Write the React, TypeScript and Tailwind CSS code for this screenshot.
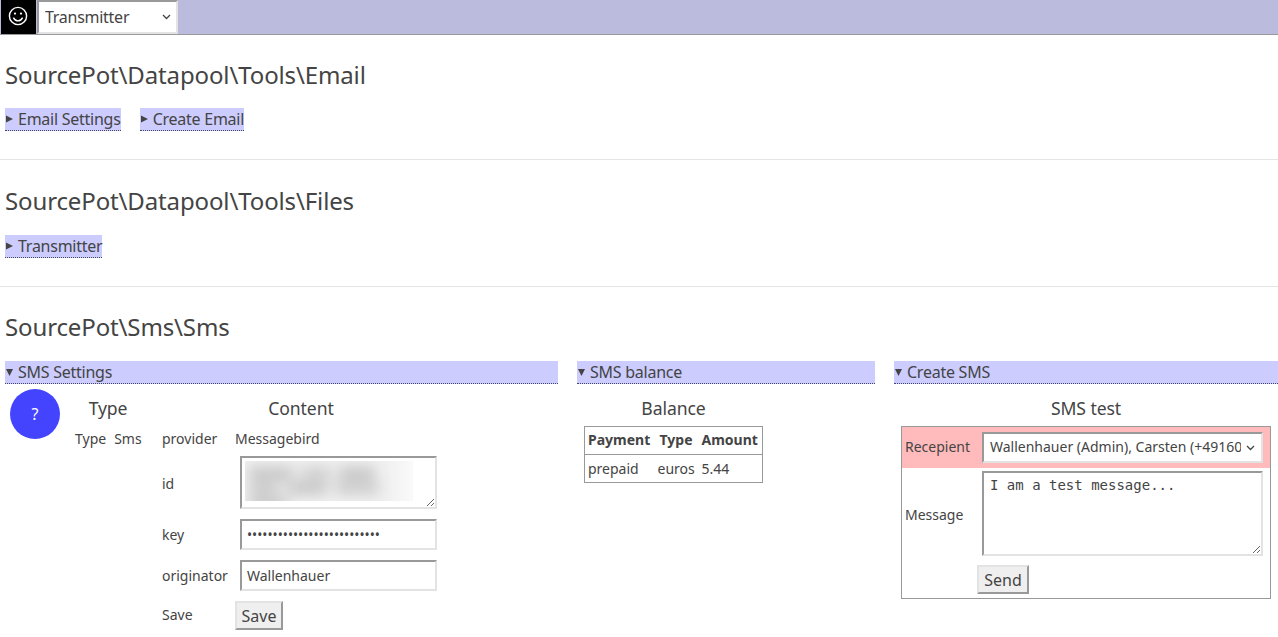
import { useState } from 'react'

const insetField = 'border-2 border-t-[#999] border-l-[#999] border-r-[#e3e3e3] border-b-[#e3e3e3] bg-white text-[#444] outline-none'
const buttonField = 'border-2 border-t-[#e3e3e3] border-l-[#e3e3e3] border-r-[#999] border-b-[#999] bg-[#efefef] text-[#444]'
const summaryClass = 'flex items-center bg-[#ccf] border-b border-dotted border-[#446] cursor-pointer whitespace-nowrap h-[23px] tracking-[-0.25px] list-none [&::-webkit-details-marker]:hidden'
const headingClass = 'text-2xl leading-8 tracking-[-0.13px]'
const captionClass = 'text-[17.6px] tracking-[-0.1px] leading-[22px] text-center h-[22px]'

function Smiley() {
  return (
    <svg className="mb-[3px] mr-[1px]" width="20" height="20" viewBox="0 0 20 20" fill="none" stroke="white" strokeWidth="1.4">
      <circle cx="10" cy="10" r="8.6" />
      <circle cx="7" cy="7.6" r="1.1" fill="white" stroke="none" />
      <circle cx="13" cy="7.6" r="1.1" fill="white" stroke="none" />
      <path d="M5.4 11.6c1 2.2 2.7 3.3 4.6 3.3s3.6-1.1 4.6-3.3" />
    </svg>
  )
}

function Chevron({ className }: { className: string }) {
  return (
    <svg className={className} width="9" height="6" viewBox="0 0 9 6" fill="none" stroke="#444" strokeWidth="1.3">
      <path d="M1 1l3.5 3.5L8 1" />
    </svg>
  )
}

function Marker({ open }: { open?: boolean }) {
  return (
    <svg className="ml-[1px] mr-[5px] shrink-0" width="7" height="8" viewBox="0 0 7 8" fill="#444">
      <path d={open ? 'M0 1h7L3.5 8z' : 'M0 0.5v7L7 4z'} />
    </svg>
  )
}

function SmsSettings() {
  return (
    <details open className="w-[553px] shrink-0">
      <summary className={summaryClass}><Marker open />SMS Settings</summary>
      <div className="flex">
        <div className="ml-[5px] mt-[5px] w-[50px] h-[50px] rounded-full bg-[#44f] text-white flex items-center justify-center text-base shrink-0">?</div>
        <div className="ml-[15px] w-[66px] text-sm">
          <div className={`${captionClass} mt-[13px] w-[66px]`}>Type</div>
          <div className="flex gap-[8px] mt-[10px]">
            <span>Type</span>
            <span>Sms</span>
          </div>
        </div>
        <div className="ml-[21px] w-[276px] text-sm">
          <div className={`${captionClass} mt-[13px] ml-[2px]`}>Content</div>
          <div className="flex mt-[10px] h-[19px]">
            <span className="w-[73px]">provider</span>
            <span>Messagebird</span>
          </div>
          <div className="flex items-center mt-[8px]">
            <span className="w-[78px] pt-[3px]">id</span>
            <div className="relative w-[197px] h-[53px]">
              <textarea readOnly defaultValue="" className={`${insetField} w-full h-full block`} />
              <div className="absolute left-[5px] top-[5px] w-[168px] h-[40px] bg-[linear-gradient(to_right,#f1f1f1_85%,#fafafa)] overflow-hidden">
                <div className="blur-[7px] w-full h-full flex flex-wrap gap-x-[8px] gap-y-[3px] px-[4px] pt-[6px]">
                  <span className="w-[44px] h-[13px] bg-[#c4c4c4]" />
                  <span className="w-[30px] h-[13px] bg-[#cdcdcd]" />
                  <span className="w-[36px] h-[13px] bg-[#c4c4c4]" />
                  <span className="w-[30px] h-[13px] bg-[#c8c8c8]" />
                  <span className="w-[40px] h-[11px] bg-[#c0c0c0]" />
                  <span className="w-[44px] h-[11px] bg-[#c8c8c8]" />
                  <span className="w-[40px] h-[11px] bg-[#c4c4c4]" />
                </div>
              </div>
            </div>
          </div>
          <div className="flex items-center mt-[10px]">
            <span className="w-[78px]">key</span>
            <input readOnly type="password" defaultValue="abcdefghijklmnopqrstuvwxyz" className={`${insetField} w-[197px] h-[31px] px-[5px] text-[13.6px]`} />
          </div>
          <div className="flex items-center mt-[10px]">
            <span className="w-[78px]">originator</span>
            <input readOnly defaultValue="Wallenhauer" className={`${insetField} w-[197px] h-[31px] px-[5px] text-sm`} />
          </div>
          <div className="flex items-center mt-[10px]">
            <span className="w-[73px] pb-[2px]">Save</span>
            <button className={`${buttonField} w-[48px] h-[29px] text-base`}>Save</button>
          </div>
        </div>
      </div>
    </details>
  )
}

function SmsBalance() {
  return (
    <details open className="w-[298px] shrink-0">
      <summary className={summaryClass}><Marker open />SMS balance</summary>
      <div className="ml-[7px] w-[179px]">
        <div className={`${captionClass} mt-[13px] mb-[7px]`}>Balance</div>
        <table className="border border-[#999] border-collapse text-sm w-[179px]">
          <thead>
            <tr className="border-b border-[#999] h-[28px]">
              <th className="text-left w-[70px] pl-[3px] pb-[2px] font-bold">Payment</th>
              <th className="text-left w-[47px] pl-[5px] pb-[2px] font-bold">Type</th>
              <th className="text-left pl-[0px] pb-[2px] font-bold">Amount</th>
            </tr>
          </thead>
          <tbody>
            <tr className="h-[28px]">
              <td className="pl-[3px]">prepaid</td>
              <td className="pl-[3px]">euros</td>
              <td className="pl-[0px]">5.44</td>
            </tr>
          </tbody>
        </table>
      </div>
    </details>
  )
}

function CreateSms() {
  const [recipient, setRecipient] = useState('carsten')
  return (
    <details open className="w-[384px] shrink-0">
      <summary className={summaryClass}><Marker open />Create SMS</summary>
      <div className="ml-[7px] w-[370px]">
        <div className={`${captionClass} mt-[13px] mb-[7px]`}>SMS test</div>
        <div className="border border-[#999] text-sm">
          <div className="flex items-center bg-[#fbb] h-[41px]">
            <span className="w-[80px] pl-[3px] pb-[1px]">Recepient</span>
            <div className="relative w-[281px] h-[31px]">
              <select
                value={recipient}
                onChange={(e) => setRecipient(e.target.value)}
                className={`${insetField} appearance-none w-full h-full pl-[6px] pr-[20px] pb-[2px] text-sm`}
              >
                <option value="carsten">Wallenhauer (Admin), Carsten (+49160 1234567)</option>
              </select>
              <Chevron className="absolute right-[8px] top-[13px] pointer-events-none" />
            </div>
          </div>
          <div className="flex items-center mt-[3px]">
            <span className="w-[80px] pl-[3px] pt-[2px]">Message</span>
            <textarea
              readOnly
              defaultValue="I am a test message..."
              className={`${insetField} w-[281px] h-[85px] px-[6px] py-[2px] text-sm font-['DejaVu_Sans_Mono',monospace]`}
            />
          </div>
          <div className="pl-[75px] mt-[9px] mb-[4px]">
            <button className={`${buttonField} w-[52px] h-[29px] text-base`}>Send</button>
          </div>
        </div>
      </div>
    </details>
  )
}

export default function App() {
  return (
    <div className="h-[637px] overflow-hidden bg-white text-[#444] font-['Noto_Sans',sans-serif]">
      <div className="flex h-[35px] bg-[#bbd] border-b border-[#999]">
        <div className="ml-[1px] w-[35px] h-[34px] bg-black flex items-center justify-center">
          <Smiley />
        </div>
        <div className="relative ml-[1px] w-[141px] h-[34px]">
          <select className={`${insetField} appearance-none w-full h-full pl-[6px] text-base tracking-[-0.27px]`}>
            <option>Transmitter</option>
          </select>
          <Chevron className="absolute right-[7px] top-[14px] pointer-events-none" />
        </div>
      </div>

      <section className="h-[125px] border-b border-[#e5e5e5] pl-[5px] pt-[24px]">
        <h1 className={`${headingClass} mb-[17px]`}>SourcePot\Datapool\Tools\Email</h1>
        <div className="flex gap-[19px]">
          <details><summary className={summaryClass}><Marker />Email Settings</summary></details>
          <details><summary className={summaryClass}><Marker />Create Email</summary></details>
        </div>
      </section>

      <section className="h-[127px] border-b border-[#e5e5e5] pl-[5px] pt-[25px]">
        <h1 className={`${headingClass} mb-[18px]`}>SourcePot\Datapool\Tools\Files</h1>
        <div className="flex gap-[19px]">
          <details><summary className={summaryClass}><Marker />Transmitter</summary></details>
        </div>
      </section>

      <section className="pl-[5px] pt-[24px]">
        <h1 className={`${headingClass} mb-[18px]`}>SourcePot\Sms\Sms</h1>
        <div className="flex gap-[19px]">
          <SmsSettings />
          <SmsBalance />
          <CreateSms />
        </div>
      </section>
    </div>
  )
}
